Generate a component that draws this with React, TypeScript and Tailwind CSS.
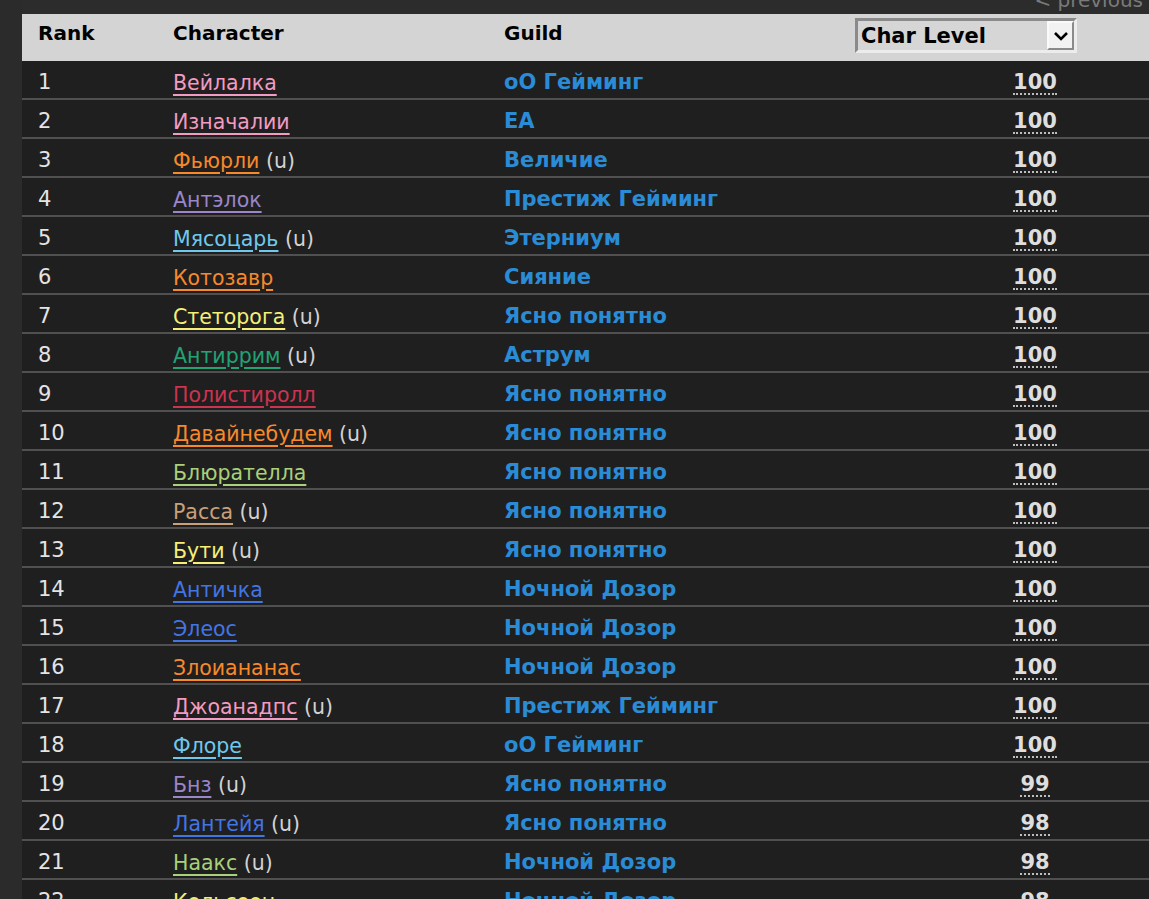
import React from "react";

type Row = { rank: number; name: string; color: string; u: boolean; guild: string; level: number };

const PINK = "#f29bc3";
const ORANGE = "#f7892b";
const PURPLE = "#9a86c9";
const LBLUE = "#6fc9ec";
const YELLOW = "#f5ef78";
const TEAL = "#22a374";
const RED = "#cc3350";
const GREEN = "#a9d07a";
const TAN = "#c9a07a";
const BLUE = "#4275e4";

const rows: Row[] = [
  { rank: 1, name: "Вейлалка", color: PINK, u: false, guild: "оО Гейминг", level: 100 },
  { rank: 2, name: "Изначалии", color: PINK, u: false, guild: "EA", level: 100 },
  { rank: 3, name: "Фьюрли", color: ORANGE, u: true, guild: "Величие", level: 100 },
  { rank: 4, name: "Антэлок", color: PURPLE, u: false, guild: "Престиж Гейминг", level: 100 },
  { rank: 5, name: "Мясоцарь", color: LBLUE, u: true, guild: "Этерниум", level: 100 },
  { rank: 6, name: "Котозавр", color: ORANGE, u: false, guild: "Сияние", level: 100 },
  { rank: 7, name: "Стеторога", color: YELLOW, u: true, guild: "Ясно понятно", level: 100 },
  { rank: 8, name: "Антиррим", color: TEAL, u: true, guild: "Аструм", level: 100 },
  { rank: 9, name: "Полистиролл", color: RED, u: false, guild: "Ясно понятно", level: 100 },
  { rank: 10, name: "Давайнебудем", color: ORANGE, u: true, guild: "Ясно понятно", level: 100 },
  { rank: 11, name: "Блюрателла", color: GREEN, u: false, guild: "Ясно понятно", level: 100 },
  { rank: 12, name: "Расса", color: TAN, u: true, guild: "Ясно понятно", level: 100 },
  { rank: 13, name: "Бути", color: YELLOW, u: true, guild: "Ясно понятно", level: 100 },
  { rank: 14, name: "Античка", color: BLUE, u: false, guild: "Ночной Дозор", level: 100 },
  { rank: 15, name: "Элеос", color: BLUE, u: false, guild: "Ночной Дозор", level: 100 },
  { rank: 16, name: "Злоиананас", color: ORANGE, u: false, guild: "Ночной Дозор", level: 100 },
  { rank: 17, name: "Джоанадпс", color: PINK, u: true, guild: "Престиж Гейминг", level: 100 },
  { rank: 18, name: "Флоре", color: LBLUE, u: false, guild: "оО Гейминг", level: 100 },
  { rank: 19, name: "Бнз", color: PURPLE, u: true, guild: "Ясно понятно", level: 99 },
  { rank: 20, name: "Лантейя", color: BLUE, u: true, guild: "Ясно понятно", level: 98 },
  { rank: 21, name: "Наакс", color: GREEN, u: true, guild: "Ночной Дозор", level: 98 },
  { rank: 22, name: "Кельсеон", color: YELLOW, u: false, guild: "Ночной Дозор", level: 98 },
];

const font = { fontFamily: '"DejaVu Sans", Verdana, sans-serif' };

export default function App() {
  return (
    <div className="w-[1149px] h-[899px] overflow-hidden bg-[#2c2c2c] flex" style={font}>
      <div className="w-[22px] shrink-0 bg-[#2b2b2b]" />
      <div className="flex-1 flex flex-col min-w-0">
        <div className="h-[14px] shrink-0 overflow-hidden flex justify-end bg-[#2c2c2c]">
          <span className="mt-[-12px] mr-[6px] text-[20px] leading-[24px] text-[#7a7a7a] whitespace-nowrap">
            &lt; previous
          </span>
        </div>
        <div className="h-[47px] shrink-0 bg-[#d5d4d4] flex items-center text-[20px] font-bold text-black">
          <div className="w-[151px] pl-[16px] pb-[10px]">Rank</div>
          <div className="w-[331px] pb-[10px]">Character</div>
          <div className="w-[351px] pb-[10px]">Guild</div>
          <div className="flex-1 pb-[4px]">
            <div className="w-[222px] h-[35px] flex items-center justify-between bg-[#d6d6d6] border-[3px] border-t-[#8a8a8a] border-l-[#8a8a8a] border-r-[#ececec] border-b-[#ececec]">
              <span className="pl-[3px] pt-[2px] leading-none text-[21px]">Char Level</span>
              <span className="w-[27px] h-[29px] flex items-center justify-center bg-[#f2f2f2] border-[2px] border-t-[#fafafa] border-l-[#fafafa] border-r-[#8a8a8a] border-b-[#8a8a8a]">
                <svg width="16" height="10" viewBox="0 0 16 10">
                  <path d="M2 2 L8 8 L14 2" fill="none" stroke="#000" strokeWidth="2.6" />
                </svg>
              </span>
            </div>
          </div>
        </div>
        <div className="flex flex-col">
          {rows.map((r) => (
            <div
              key={r.rank}
              className="h-[39px] shrink-0 flex items-center bg-[#201f1f] border-b-[2px] border-[#505050] text-[21px]"
            >
              <div className="w-[151px] pl-[16px] pt-[7px] text-[#e4e4e4]">{r.rank}</div>
              <div className="w-[331px] pt-[7px] whitespace-nowrap text-[20.5px]">
                <span
                  className="underline decoration-2 underline-offset-[4px]"
                  style={{ color: r.color }}
                >
                  {r.name}
                </span>
                {r.u && <span className="text-[#d2d2d2]"> (u)</span>}
              </div>
              <div className="w-[351px] pt-[7px] font-bold text-[#2a8cd6] whitespace-nowrap">{r.guild}</div>
              <div className="flex-1 pt-[7px]">
                <div className="ml-[130px] w-[100px] flex justify-center">
                  <span className="font-bold text-[#dedede] leading-[22px] border-b-[2px] border-dotted border-[#bdbdbd]">
                    {r.level}
                  </span>
                </div>
              </div>
            </div>
          ))}
        </div>
      </div>
    </div>
  );
}
